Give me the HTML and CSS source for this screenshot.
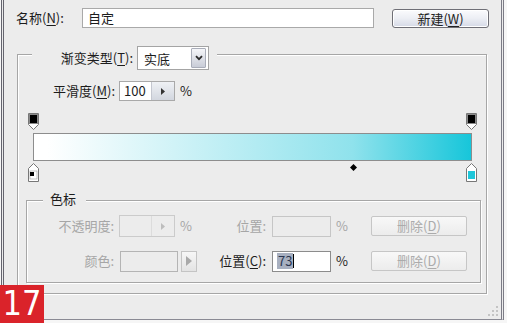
FILE: index.html
```html
<!DOCTYPE html>
<html lang="zh-CN">
<head>
    <meta charset="UTF-8">
    <title>渐变编辑器</title>
    <link rel="stylesheet" href="styles.css">
</head>
<body>
    <div class="window">
        <div class="name-row">
            <label class="lbl name-lbl">名称(<u>N</u>):</label>
            <div class="field name-field">自定</div>
            <button class="btn new-btn">新建(<u>W</u>)</button>
        </div>

        <div class="group outer">
            <div class="group-title type-title">
                <span class="lbl type-lbl">渐变类型(<u>T</u>):</span>
                <div class="select">
                    <span>实底</span>
                    <span class="select-arrow">
                        <svg width="8" height="6" viewBox="0 0 8 6"><path d="M1 1.2L4 4.2L7 1.2" fill="none" stroke="#2a2a2a" stroke-width="1.8"/></svg>
                    </span>
                </div>
            </div>

            <div class="smooth-row">
                <span class="lbl smooth-lbl">平滑度(<u>M</u>):</span>
                <div class="spin">
                    <span class="spin-value">100</span>
                    <span class="spin-btn">
                        <svg width="4" height="7" viewBox="0 0 4 7"><path d="M0 0L4 3.5L0 7Z" fill="#333"/></svg>
                    </span>
                </div>
                <span class="pct">%</span>
            </div>

            <div class="ramp">
                <div class="stops top">
                    <svg width="11" height="17" viewBox="0 0 11 17"><path d="M0.5 0.5H10.5V11.5L5.5 16.5L0.5 11.5Z" fill="#fff" stroke="#777"/><rect x="1" y="1" width="9" height="10" fill="#8a8a8a"/><rect x="2" y="2" width="7" height="8" fill="#000"/></svg>
                    <svg width="11" height="17" viewBox="0 0 11 17"><path d="M0.5 0.5H10.5V11.5L5.5 16.5L0.5 11.5Z" fill="#fff" stroke="#777"/><rect x="1" y="1" width="9" height="10" fill="#8a8a8a"/><rect x="2" y="2" width="7" height="8" fill="#000"/></svg>
                </div>
                <div class="ramp-bar"></div>
                <div class="stops bottom">
                    <svg width="11" height="19" viewBox="0 0 11 19"><path d="M5.5 0.5L10.5 5.5V18.5H0.5V5.5Z" fill="#fff" stroke="#777"/><rect x="2" y="8" width="7" height="8" fill="#fff" stroke="#999" stroke-width="0.6"/><rect x="2" y="9" width="4" height="4" fill="#000"/></svg>
                    <svg width="11" height="19" viewBox="0 0 11 19"><path d="M5.5 0.5L10.5 5.5V18.5H0.5V5.5Z" fill="#fff" stroke="#777"/><rect x="2" y="8" width="7" height="8" fill="#1ec6d9"/></svg>
                    <svg class="midpoint" style="left: 73%" width="7" height="7" viewBox="0 0 7 7"><path d="M3.5 0L7 3.5L3.5 7L0 3.5Z" fill="#000"/></svg>
                </div>
            </div>

            <div class="group inner">
                <div class="group-title stop-title">色标</div>
                <div class="stop-grid">
                    <span class="lbl right off">不透明度:</span>
                    <div class="cell">
                        <div class="spin off opacity-spin">
                            <span class="spin-value"></span>
                            <span class="spin-btn">
                                <svg width="4" height="7" viewBox="0 0 4 7"><path d="M0 0L4 3.5L0 7Z" fill="#bdbdbd"/></svg>
                            </span>
                        </div>
                        <span class="pct off">%</span>
                    </div>
                    <span class="lbl right pos-lbl off">位置:</span>
                    <div class="cell">
                        <div class="field pos-field off"></div>
                        <span class="pct off">%</span>
                    </div>
                    <button class="btn del-btn" disabled>删除(<u>D</u>)</button>

                    <span class="lbl right off">颜色:</span>
                    <div class="cell">
                        <div class="swatch"></div>
                        <div class="swatch-btn">
                            <svg width="6" height="10" viewBox="0 0 6 10"><path d="M0 0L6 5L0 10Z" fill="#a9a9a9"/></svg>
                        </div>
                    </div>
                    <span class="lbl right pos-lbl">位置(<u>C</u>):</span>
                    <div class="cell">
                        <div class="field pos-field active"><span class="sel">73</span><span class="caret"></span></div>
                        <span class="pct">%</span>
                    </div>
                    <button class="btn del-btn" disabled>删除(<u>D</u>)</button>
                </div>
            </div>
        </div>

        <div class="grip">
            <svg width="14" height="14" viewBox="0 0 14 14">
                <rect x="10" y="2" width="2" height="2" fill="#c4c4c4"/>
                <rect x="6" y="6" width="2" height="2" fill="#c4c4c4"/>
                <rect x="10" y="6" width="2" height="2" fill="#c4c4c4"/>
                <rect x="2" y="10" width="2" height="2" fill="#c4c4c4"/>
                <rect x="6" y="10" width="2" height="2" fill="#c4c4c4"/>
                <rect x="10" y="10" width="2" height="2" fill="#c4c4c4"/>
            </svg>
        </div>
    </div>
    <div class="badge">17</div>
</body>
</html>
```

FILE: styles.css
```css
* {
    box-sizing: border-box;
}
body {
    margin: 0;
    width: 507px;
    height: 323px;
    overflow: hidden;
    position: relative;
    background-color: #f6f6f6;
    font-family: "Noto Sans CJK SC", "Noto Sans", sans-serif;
    font-size: 13px;
    color: #1c1c1c;
}
u {
    text-underline-offset: 2px;
}
.window {
    position: relative;
    margin-left: 1px;
    width: 503px;
    height: 320px;
    padding: 8px 0 0 12px;
    background-color: #ececec;
    border-left: 3px double #65656f;
    border-right: 3px double #7c7c86;
    border-bottom: 1px solid #8a8a94;
}
.lbl {
    white-space: nowrap;
    line-height: 18px;
}
.lbl.right {
    text-align: right;
}
.off {
    color: #a6a6a6;
}
.name-row {
    display: flex;
    align-items: center;
    height: 20px;
}
.name-lbl {
    width: 66px;
}
.field {
    background-color: #ffffff;
    border: 1px solid #a9a9a9;
    line-height: 18px;
}
.name-field {
    width: 292px;
    height: 20px;
    padding-left: 5px;
}
.btn {
    padding: 0;
    font: inherit;
    border-radius: 3px;
}
.new-btn {
    margin-left: 18px;
    width: 97px;
    height: 19px;
    line-height: 17px;
    color: #222222;
    border: 1px solid #6f6f76;
    background: linear-gradient(#fbfbfd, #eceef4 50%, #d5d9e6);
    box-shadow: inset 0 0 0 1px #ffffff;
}
.group {
    border: 1px solid #a6a6a6;
    box-shadow: inset 1px 1px 0 #ffffff, 1px 1px 0 #ffffff;
}
.outer {
    margin: 26px 0 0 1px;
    width: 470px;
    height: 240px;
}
.group-title {
    display: flex;
    align-items: center;
    width: fit-content;
    background-color: #ececec;
}
.type-title {
    margin: -9px 0 0 14px;
    padding: 0 8px 0 21px;
    height: 24px;
    gap: 4px;
}
.type-lbl {
    width: 80px;
    text-align: right;
}
.select {
    width: 72px;
    height: 24px;
    display: flex;
    align-items: center;
    justify-content: space-between;
    padding-left: 6px;
    background-color: #ffffff;
    border: 1px solid #a4a4a4;
}
.select-arrow {
    width: 15px;
    height: 20px;
    margin-right: 2px;
    display: flex;
    align-items: center;
    justify-content: center;
    border: 1px solid #a9adb9;
    border-radius: 1px;
    background: linear-gradient(#f5f6f9, #c8ccd7);
}
.smooth-row {
    display: flex;
    align-items: center;
    height: 20px;
    margin-top: 11px;
}
.smooth-lbl {
    width: 97px;
    text-align: right;
    margin-right: 4px;
}
.spin {
    width: 56px;
    height: 20px;
    display: flex;
    background-color: #ffffff;
    border: 1px solid #a9a9a9;
}
.spin-value {
    width: 31px;
    padding-left: 4px;
    line-height: 18px;
}
.spin-btn {
    flex: 1;
    display: flex;
    align-items: center;
    justify-content: center;
    border-left: 1px solid #c4c7d0;
    background: linear-gradient(#eff1f5, #d2d6df);
}
.pct {
    margin-left: 5px;
    line-height: 18px;
}
.ramp {
    margin: 12px 0 0 15px;
    width: 439px;
}
.stops {
    display: flex;
    justify-content: space-between;
}
.stops svg:first-child {
    margin-left: -5px;
}
.stops svg:nth-child(2) {
    margin-right: -5px;
}
.stops.top {
    height: 17px;
}
.ramp-bar {
    height: 28px;
    margin-top: 3px;
    border: 1px solid #8d8d8d;
    background: linear-gradient(to right, #ffffff, #ffffff 3%, #8fe2ec 73%, #17c6da);
}
.stops.bottom {
    position: relative;
    height: 19px;
    margin-top: 2px;
}
.midpoint {
    position: absolute;
    top: 1px;
    margin-left: -3px;
}
.inner {
    margin: 18px 0 0 8px;
    width: 455px;
    padding-bottom: 10px;
}
.stop-title {
    margin: -11px 0 0 16px;
    padding: 0 10px 0 7px;
    height: 17px;
    line-height: 17px;
}
.stop-grid {
    display: grid;
    grid-template-columns: 87px 86px 69px 102px 96px;
    grid-auto-rows: 22px;
    row-gap: 13px;
    align-items: center;
    margin-top: 8px;
}
.cell {
    display: flex;
    align-items: center;
}
.opacity-spin {
    margin-left: 5px;
    height: 22px;
    background-color: #ececec;
    border-color: #cbcbcb;
}
.opacity-spin .spin-btn {
    background: #ececec;
    border-left-color: #dcdcdc;
}
.pos-lbl {
    padding-right: 3px;
}
.pos-field {
    margin-left: 3px;
    width: 59px;
    height: 21px;
}
.pos-field.off {
    background-color: #ececec;
    border-color: #c6c6c6;
}
.pos-field.active {
    border-color: #8c8c8c;
    padding-left: 4px;
    display: flex;
    align-items: center;
}
.sel {
    background-color: #a8b0c0;
    color: #2a3650;
    line-height: 16px;
    padding: 0 1px;
}
.caret {
    width: 1px;
    height: 14px;
    background-color: #000000;
}
.swatch {
    margin-left: 6px;
    width: 58px;
    height: 21px;
    background-color: #ececec;
    border: 1px solid #b4b4b4;
}
.swatch-btn {
    margin-left: 3px;
    width: 16px;
    height: 21px;
    display: flex;
    align-items: center;
    justify-content: center;
    border: 1px solid #c4c4c4;
    background: linear-gradient(#f7f7f7, #e3e3e3);
}
.del-btn {
    width: 96px;
    height: 20px;
    line-height: 18px;
    color: #ababab;
    border: 1px solid #c6c6c6;
    border-radius: 2px;
    background: linear-gradient(#f8f8f8, #ececec);
}
.grip {
    position: absolute;
    right: 1px;
    bottom: 1px;
    display: flex;
}
.badge {
    position: absolute;
    left: 0;
    top: 285px;
    width: 44px;
    height: 38px;
    background-color: #da232a;
    color: #ffffff;
    font-family: "Liberation Sans Narrow", "DejaVu Sans Condensed", "Liberation Sans", sans-serif;
    font-size: 34px;
    line-height: 37px;
    text-align: center;
}
```
